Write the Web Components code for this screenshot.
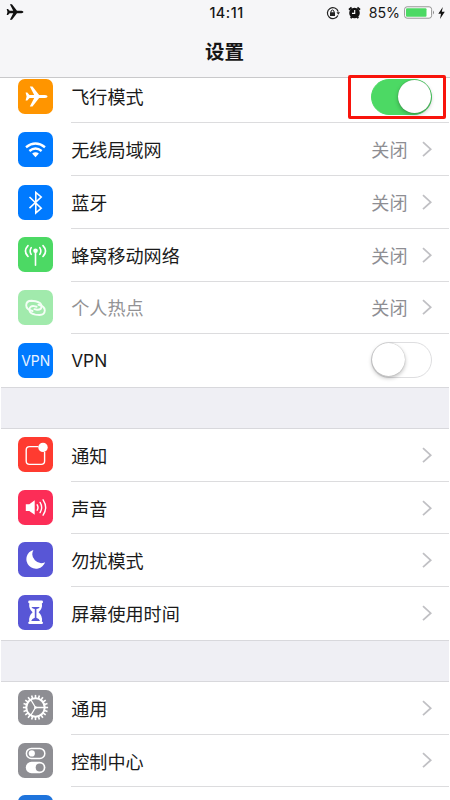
<!DOCTYPE html>
<html lang="zh-CN">
<head>
<meta charset="utf-8">
<title>设置</title>
<style>
html,body{margin:0;height:100%;overflow:hidden;background:#fff}
body{font-family:"Noto Sans CJK SC","Liberation Sans",sans-serif;color:#1a1a1a}
</style>
</head>
<body>
<settings-screen></settings-screen>
<script>
const make = (name, html) => customElements.define(name, class extends HTMLElement {
  constructor() {
    super();
    this.attachShadow({mode: 'open'});
  }
  connectedCallback() {
    const t = document.createElement('template');
    t.innerHTML = typeof html === 'function' ? html(this) : html;
    this.shadowRoot.replaceChildren(t.content.cloneNode(true));
  }
});

const plane = c => `<path fill="${c}" d="M7.6 13.4 L9.3 13.4 L11.5 16 H16.2 L11.8 7.4 H14.5 L21.1 16 H27 Q29.6 16.3 29.6 17.5 Q29.6 18.7 27 19 H21.1 L14.5 27.6 H11.8 L16.2 19 H11.5 L9.3 21.6 H7.6 L8.6 17.5Z"/>`;
const teeth = Array.from({length: 20}, (_, i) => `<path d="M17.5 8.6 V4.9" transform="rotate(${i * 18} 17.5 17.5)"/>`).join('');
const loop = 'M14.6 21 Q8.2 19.6 8.2 15.3 Q8.4 10.8 13.4 10.8 L17.6 11.2 Q23.6 12.4 23.6 16.4 Q23.2 20.2 19 19.7 L16.4 19.1';
const ICONS = {
  plane: ['#ff9500', plane('#fff')],
  wifi: ['#007aff', `<g fill="none" stroke="#fff" stroke-width="2.4"><path d="M8 15.3 Q17.5 7.9 27 15.3"/><path d="M11.4 19 Q17.5 14.1 23.6 19"/></g><path fill="#fff" d="M14.1 21.6 Q17.5 18.9 20.9 21.6 L17.5 25.2Z"/>`],
  bluetooth: ['#007aff', `<path fill="none" stroke="#fff" stroke-width="1.6" d="M11.5 12 L23.2 23.2 L17.8 28 V7.4 L23.2 12 L11.5 23.2"/>`],
  cell: ['#4cd964', `<g fill="none" stroke="#fff" stroke-width="1.6" stroke-linecap="round"><path d="M17.5 14.3 V28.2"/><path d="M13.2 10.6 Q11.1 14 13.2 17.4 M21.8 10.6 Q23.9 14 21.8 17.4 M10 8.6 Q4.9 14 10 19.4 M25 8.6 Q30.1 14 25 19.4"/></g><circle cx="17.5" cy="13.8" r="2.3" fill="#fff"/>`],
  hotspot: ['#a1eaac', `<g fill="none" stroke="#f4fef6" stroke-width="1.9" stroke-linecap="round"><path d="${loop}"/><path d="${loop}" transform="rotate(180 17.5 17.9)"/></g>`],
  vpn: ['#007aff', `<text x="17.7" y="22.6" text-anchor="middle" textLength="29" lengthAdjust="spacingAndGlyphs" fill="#eaf4ff" font-family="Inter,sans-serif" font-size="14">VPN</text>`],
  notify: ['#ff3b30', `<path fill="none" stroke="#fff" stroke-width="1.4" d="M20.5 9.6 H11.6 Q8.2 9.6 8.2 12.9 V24 Q8.2 27.4 11.6 27.4 H23.2 Q26.6 27.4 26.6 24 V15"/><circle cx="25" cy="10.4" r="4.7" fill="#fff"/>`],
  sound: ['#fc2d57', `<path fill="#fff" d="M7.8 14.2 H11.3 L16.7 10.2 V24.8 L11.3 20.9 H7.8Z"/><g fill="none" stroke="#fff" stroke-width="1.4" stroke-linecap="round"><path d="M19.2 14.8 Q20.8 17.5 19.2 20.2"/><path d="M22.1 12.4 Q25.2 17.5 22.1 22.6"/><path d="M25.1 9.8 Q30.2 17.5 25.1 25.2"/></g>`],
  moon: ['#5856d6', `<path fill="#fff" d="M15.4 7.9 A9.6 9.6 0 1 0 27.1 20.2 A9 9 0 0 1 15.4 7.9Z"/>`],
  hourglass: ['#5856d6', `<path fill="#fff" d="M10.2 6.9 Q10.2 5.6 11.5 5.6 H23.7 Q25 5.6 25 6.9 Q25 8 23.9 8.2 Q24.8 13.6 20.6 17.3 Q24.8 21 23.9 26.4 Q25 26.6 25 27.7 Q25 29 23.7 29 H11.5 Q10.2 29 10.2 27.7 Q10.2 26.6 11.3 26.4 Q10.4 21 14.6 17.3 Q10.4 13.6 11.3 8.2 Q10.2 8 10.2 6.9Z"/><path fill="#5856d6" d="M13.4 11.9 H21.8 Q20.6 13.6 18.4 14 V22.8 Q21.2 23.6 22 26 H13.2 Q14 23.6 16.8 22.8 V14 Q14.6 13.6 13.4 11.9Z"/>`],
  gear: ['#8e8e93', `<g fill="none" stroke="#fff"><circle cx="17.5" cy="17.5" r="9.2" stroke-width="2"/><g stroke-width="1.6">${teeth}</g><path stroke-width="1.3" d="M17.5 17.5 H26 M17.5 17.5 L13 10 M17.5 17.5 L13 25"/><circle cx="17.5" cy="17.5" r="1.3" fill="#fff" stroke="none"/></g>`],
  control: ['#8e8e93', `<rect x="8.4" y="5.4" width="18.4" height="10" rx="5" fill="none" stroke="#fff" stroke-width="1.5"/><circle cx="13.8" cy="10.4" r="3.1" fill="#fff"/><rect x="7.8" y="18.8" width="19.6" height="11.4" rx="5.7" fill="#fff"/><circle cx="21.7" cy="24.5" r="4" fill="#8e8e93"/>`],
  blue: ['#1f74dc', '']
};

make('app-icon', el => {
  const [bg, art] = ICONS[el.getAttribute('name')];
  return `<style>:host{display:block;width:35px;height:35px}svg{display:block}</style>
  <svg width="35" height="35" viewBox="0 0 35 35"><rect width="35" height="35" rx="6.8" fill="${bg}"/>${art}</svg>`;
});

make('toggle-switch', `<style>
:host{display:flex;box-sizing:border-box;width:61.5px;height:36px;border-radius:18px;border:1.5px solid #dedee0;background:#fff}
i{width:33px;height:33px;border-radius:50%;background:#fff;box-shadow:0 2px 4px #0004,0 0 1px #0005}
:host([on]){background:#4cd964;border-color:#4cd964;justify-content:flex-end}
</style><i></i>`);

make('settings-row', el => {
  const end = el.getAttribute('end');
  return `<style>
  :host{display:flex;height:52.75px;padding-left:17px;background:#fff;font-size:18.1px}
  app-icon{margin-top:var(--icon-top,8.5px)}
  .body{flex:1;display:flex;align-items:center;margin-left:18.2px;padding-right:17px;box-sizing:border-box;border-bottom:1px solid #dcdcde}
  :host([last]) .body{border-color:transparent}
  .label{flex:1;line-height:26px;padding-top:.2px}
  :host([dim]) .label{color:#929294}
  :host([latin]) .label{font-family:Inter,sans-serif;font-size:17.3px;padding-top:2px}
  .value{color:#8e8e93;margin-right:14.5px;line-height:26px;padding-top:.2px}
  svg{display:block}
  :host([end=on]) toggle-switch{margin-top:2px}
  </style>
  <app-icon name="${el.getAttribute('icon')}"></app-icon>
  <div class="body"><span class="label"><slot></slot></span>
  ${el.hasAttribute('value') ? `<span class="value">${el.getAttribute('value')}</span>` : ''}
  ${end === 'on' ? '<toggle-switch on></toggle-switch>' : end === 'off' ? '<toggle-switch></toggle-switch>' :
    '<svg width="10" height="16" viewBox="0 0 10 16"><path d="M1 1.2 L8.7 8.2 L1 15.2" fill="none" stroke="#c0c0c4" stroke-width="1.8"/></svg>'}
  </div>`;
});

make('settings-group', `<style>
:host{display:block;border-block:1px solid #d8d8dc;margin:-1px 0;background:#fff}
</style><slot></slot>`);

make('status-bar', `<style>
:host{display:grid;grid-template-columns:1fr auto 1fr;align-items:center;height:25px;padding:0 5px 0 6px;font-family:Inter,sans-serif;font-size:14px;color:#161616}
.right{display:flex;align-items:center;justify-content:flex-end}
svg{display:block}
.plane{margin-top:-2px}
.time{font-weight:500;font-size:14.4px;letter-spacing:.5px;margin-left:2px}
.pct{margin:0 4px 0 8px;font-size:14.2px}
</style>
<svg class="plane" width="18" height="16" viewBox="7 7 23 21">${plane('#111')}</svg>
<span class="time">14:11</span>
<div class="right">
<svg width="14" height="14" viewBox="0 0 14 14"><path d="M11.9 9.4 A5.5 5.5 0 1 1 12.2 5.6" fill="none" stroke="#222" stroke-width="1.2"/><path d="M10.5 6.2 H14 L12.3 8.7Z M4 6.2 H9 V10 H4Z" fill="#222"/><path d="M5 6.5 V5 Q6.5 3 8 5 V6.5" fill="none" stroke="#222"/></svg>
<svg width="13" height="13" viewBox="0 0 13 13" style="margin-left:8px"><circle cx="6.5" cy="7" r="5.3" fill="#111"/><path d="M1 3.7 L3.6 1.5 M12 3.7 L9.4 1.5 M2.8 12.3 L3.6 11 M10.2 12.3 L9.4 11" stroke="#111" stroke-width="1.8"/><path d="M6.7 4 V7.4 H4" fill="none" stroke="#fff" stroke-width="1.1"/></svg>
<span class="pct">85%</span>
<svg width="31" height="13" viewBox="0 0 31 13"><rect x=".6" y=".8" width="27" height="11.4" rx="2.5" fill="#fff" stroke="#888" stroke-width=".9"/><rect x="2" y="2.2" width="20.5" height="8.6" rx="1" fill="#4cd964"/><path d="M29 4.5 Q31 6.5 29 8.5Z" fill="#888"/></svg>
<svg width="7" height="12" viewBox="0 0 7 12" style="margin-left:3px"><path d="M4.8 0 L.3 6.8 H3 L2 12 L6.8 4.8 H3.8Z" fill="#111"/></svg>
</div>`);

make('nav-header', `<style>
:host{display:block;box-sizing:border-box;height:78px;background:#f6f6f8;border-bottom:1.5px solid #c9c9cb;position:relative;z-index:1}
h1{margin:11px 1px 0 0;font-size:19.5px;line-height:30px;font-weight:600;text-align:center;color:#161616}
</style><status-bar></status-bar><h1><slot></slot></h1>`);

make('settings-screen', `<style>
:host{display:block;position:relative;height:800px;overflow:hidden;background:#fff}
main{display:flex;flex-direction:column;gap:41.9px;margin:-7.5px 1px 0;background:#efeff4}
.g1{--icon-top:8.6px}.g2{--icon-top:8.1px}.g3{--icon-top:8px}
.mark{position:absolute;left:348px;top:75px;width:98px;height:44px;box-sizing:border-box;border:3px solid #f8140c;border-radius:2px;z-index:2}
</style>
<nav-header>设置</nav-header>
<main>
<settings-group class="g1">
<settings-row icon="plane" end="on">飞行模式</settings-row>
<settings-row icon="wifi" value="关闭">无线局域网</settings-row>
<settings-row icon="bluetooth" value="关闭">蓝牙</settings-row>
<settings-row icon="cell" value="关闭">蜂窝移动网络</settings-row>
<settings-row icon="hotspot" value="关闭" dim>个人热点</settings-row>
<settings-row icon="vpn" end="off" latin last>VPN</settings-row>
</settings-group>
<settings-group class="g2">
<settings-row icon="notify">通知</settings-row>
<settings-row icon="sound">声音</settings-row>
<settings-row icon="moon">勿扰模式</settings-row>
<settings-row icon="hourglass" last>屏幕使用时间</settings-row>
</settings-group>
<settings-group class="g3">
<settings-row icon="gear">通用</settings-row>
<settings-row icon="control">控制中心</settings-row>
<settings-row icon="blue"></settings-row>
</settings-group>
</main>
<div class="mark"></div>`);
</script>
</body>
</html>
